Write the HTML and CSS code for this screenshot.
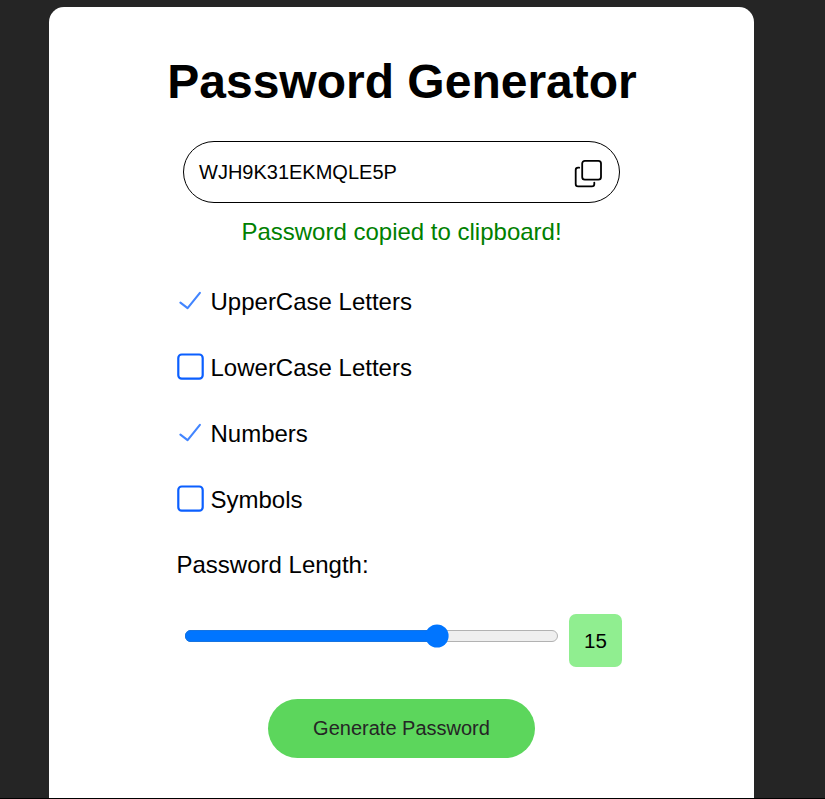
FILE: index.html
```html
<!DOCTYPE html>
<html lang="en">
<head>
<meta charset="utf-8">
<title>Password Generator</title>
<link rel="stylesheet" href="styles.css">
</head>
<body>
<main class="card">
  <h1 class="title">Password Generator</h1>
  <div class="result">
    <span class="password">WJH9K31EKMQLE5P</span>
    <svg class="copy" viewBox="0 0 30 30" fill="none" stroke="#000" stroke-width="1.8" stroke-linecap="round">
      <rect x="9.2" y="1.9" width="18.8" height="18.8" rx="2.6"/>
      <path d="M6.2 8.7H5.1Q2.7 8.7 2.7 11.1V24.9Q2.7 27.3 5.1 27.3H18.9Q21.3 27.3 21.3 24.9V23.6"/>
    </svg>
  </div>
  <p class="message">Password copied to clipboard!</p>
  <div class="options">
    <label class="option"><svg class="mark" viewBox="0 0 28 28"><path class="check" d="M3.4 15.6L10.6 21.1L22.9 5.8"/></svg><span>UpperCase Letters</span></label>
    <label class="option"><svg class="mark" viewBox="0 0 28 28"><rect class="box" x="1.3" y="1.5" width="24.4" height="24.2" rx="3.4"/></svg><span>LowerCase Letters</span></label>
    <label class="option"><svg class="mark" viewBox="0 0 28 28"><path class="check" d="M3.4 15.6L10.6 21.1L22.9 5.8"/></svg><span>Numbers</span></label>
    <label class="option"><svg class="mark" viewBox="0 0 28 28"><rect class="box" x="1.3" y="1.5" width="24.4" height="24.2" rx="3.4"/></svg><span>Symbols</span></label>
  </div>
  <p class="length-label">Password Length:</p>
  <div class="length">
    <svg class="slider" viewBox="0 0 373 24">
      <rect x=".5" y="6.5" width="372" height="11" rx="5.5" fill="#efefef" stroke="#b2b2b2"/>
      <path d="M252 6H6A6 6 0 0 0 6 18H252Z" fill="#0075ff"/>
      <path d="M252 6.5H6A5.5 5.5 0 0 0 6 17.5H252" fill="none" stroke="#1774e0"/>
      <circle cx="252" cy="12" r="11.6" fill="#0075ff"/>
    </svg>
    <output class="value">15</output>
  </div>
  <button class="generate">Generate Password</button>
</main>
</body>
</html>
```

FILE: styles.css
```css
* { box-sizing: border-box; }
html { background: #252525; }
body {
  margin: 0;
  height: 799px;
  padding: 7px 71px 0 49px;
  border-bottom: 1px solid #000;
  overflow: hidden;
  font-family: "Liberation Sans", Arial, sans-serif;
  font-size: 24px;
  color: #000;
}
.card {
  height: 791px;
  padding-top: 47px;
  background: #fff;
  border-radius: 15px 15px 0 0;
  display: flex;
  flex-direction: column;
  align-items: center;
}
.title {
  margin: 0;
  padding-left: 1px;
  font-size: 48px;
  line-height: 56px;
  white-space: nowrap;
}
.result {
  width: 437px;
  height: 62px;
  margin-top: 31px;
  padding: 0 16px 0 15px;
  border: 1px solid #000;
  border-radius: 31px;
  display: flex;
  align-items: center;
  justify-content: space-between;
}
.password { font-size: 20px; line-height: 24px; }
.copy { width: 30px; height: 30px; margin-top: 4px; }
.message {
  margin: 15px 0 0;
  line-height: 28px;
  color: #008000;
}
.options {
  width: 450px;
  margin-top: 42px;
  display: grid;
  gap: 38px;
}
.option {
  height: 28px;
  line-height: 28px;
  display: flex;
  gap: 6px;
}
.mark { width: 28px; height: 28px; margin-top: -1px; flex: none; fill: none; }
.check { stroke: #4285ff; stroke-width: 2.1; stroke-linecap: round; stroke-linejoin: round; }
.box { stroke: #0b5fff; stroke-width: 2.2; }
.length-label {
  width: 450px;
  margin: 37px 0 0;
  line-height: 28px;
}
.length {
  width: 437px;
  height: 53px;
  margin: 35px 0 0 4px;
  display: flex;
  justify-content: space-between;
}
.slider { width: 373px; height: 24px; margin-top: 10px; }
.value {
  width: 53px;
  height: 53px;
  border-radius: 7px;
  background: #90ee90;
  font-size: 20.5px;
  line-height: 53px;
  text-align: center;
}
.generate {
  width: 267px;
  height: 59px;
  margin-top: 32px;
  border: 0;
  border-radius: 30px;
  background: #5cd65c;
  color: #252525;
  font: 20px "Liberation Sans", Arial, sans-serif;
}
```
